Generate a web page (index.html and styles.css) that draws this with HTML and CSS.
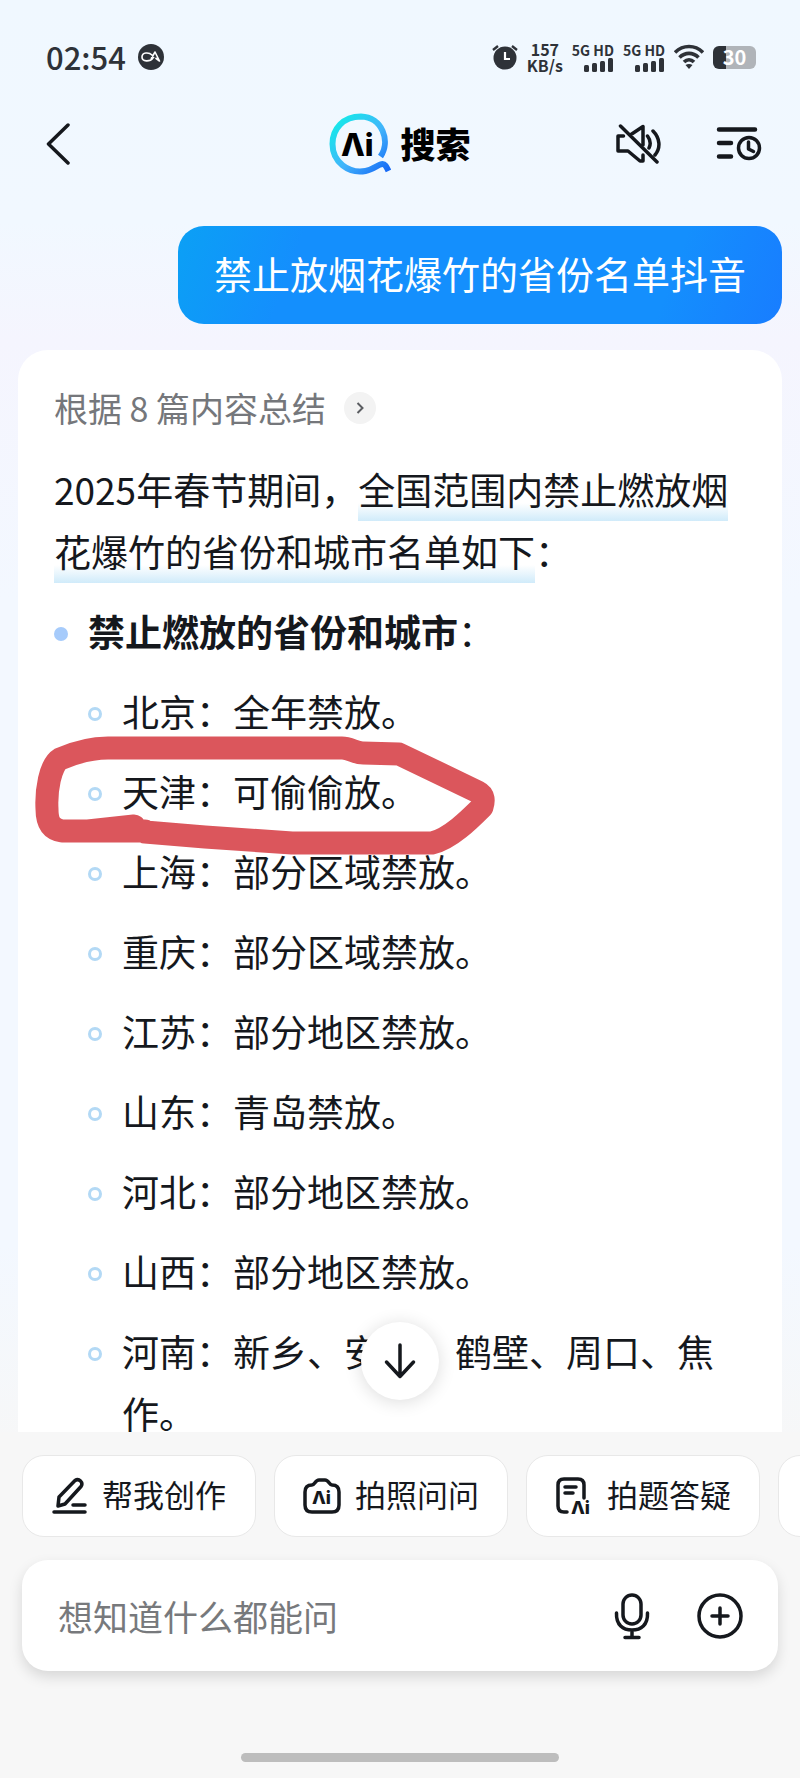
FILE: index.html
```html
<!DOCTYPE html>
<html lang="zh-CN">
  <head>
    <meta charset="UTF-8" />
    <meta name="viewport" content="width=device-width, initial-scale=1.0" />
    <title>Ai 搜索</title>
    <link rel="stylesheet" href="styles.css">
  </head>
  <body>
    <div class="status-bar">
      <div class="status-left">
        <span class="time">02:54</span>
        <svg width="26" height="26" viewBox="0 0 26 26">
          <circle cx="13" cy="13" r="13" fill="#2e3238" />
          <path d="M15 14C12 18 4 18 4 13S11 8 14 11l2 3M13 15l4-7 4.500 9-4-3" fill="none" stroke="#fff" stroke-width="1.6" stroke-linejoin="round" />
        </svg>
      </div>
      <div class="status-right">
        <svg width="26" height="26" viewBox="0 0 26 26">
          <circle cx="13" cy="14" r="11.500" fill="#2e3238" />
          <path d="M1 6l5-4M25 6l-5-4" stroke="#2e3238" stroke-width="2.400" />
          <path d="M13 8v7h5" fill="none" stroke="#fff" stroke-width="2.200" />
        </svg>
        <div class="net-speed"><span>157</span><span>KB/s</span></div>
        <div class="signal">
          <span>5G HD</span>
          <svg width="30" height="14" viewBox="0 0 30 14" fill="#2e3238">
            <rect x="0" y="7" width="5" height="7" rx="1.500" /><rect x="8" y="5" width="5" height="9" rx="1.500" />
            <rect x="16" y="3" width="5" height="11" rx="1.500" /><rect x="24" y="0" width="5" height="14" rx="1.500" />
          </svg>
        </div>
        <div class="signal">
          <span>5G HD</span>
          <svg width="30" height="14" viewBox="0 0 30 14" fill="#2e3238">
            <rect x="0" y="7" width="5" height="7" rx="1.500" /><rect x="8" y="5" width="5" height="9" rx="1.500" />
            <rect x="16" y="3" width="5" height="11" rx="1.500" /><rect x="24" y="0" width="5" height="14" rx="1.500" />
          </svg>
        </div>
        <svg width="30" height="26" viewBox="0 0 30 26" fill="none" stroke="#2e3238" stroke-width="3.600">
          <path d="M1 8.500C9 .5 21 .5 29 8.500M5.500 13.500C11 8 19 8 24.500 13.500M10 18c3-3 7-3 10 0" />
          <path d="M11.500 21q3.500-2 7 0L15 25z" fill="#2e3238" stroke="none" />
        </svg>
        <div class="battery">30</div>
      </div>
    </div>

    <header class="header">
      <button class="icon-btn back" aria-label="返回">
        <svg width="24" height="44" viewBox="0 0 24 44"><path d="M22 3L2.500 22 22 41" /></svg>
      </button>
      <h1 class="logo">
        <svg width="62" height="62" viewBox="0 0 62 62">
          <defs>
            <linearGradient id="ring" x1="0" y1="0" x2="1" y2="1">
              <stop offset="0.1" stop-color="#19e6ea" />
              <stop offset="0.55" stop-color="#41b4fb" />
              <stop offset="1" stop-color="#1668f5" />
            </linearGradient>
          </defs>
          <path d="M51.500 43.500C62 28 53 4 32 3.500 14 3.500 3.500 16 3.500 31c0 18 16 30 33 27 8-1.500 13-7 17-7 3 0 4 3 6 7" fill="none" stroke="url(#ring)" stroke-width="6" />
          <text class="logo-mark" x="12" y="43">Λi</text>
        </svg>
        <span>搜索</span>
      </h1>
      <div class="header-actions">
        <button class="icon-btn" aria-label="静音">
          <svg width="46" height="40" viewBox="0 0 46 40">
            <path d="M4.500 2L41 38M7.500 12H2v15h10l12 10h3v-6M15 10.500L27 2.500V21M31.500 12c3 4 3.500 8 1.500 12M37 7c7 7 8 17 2 24" />
          </svg>
        </button>
        <button class="icon-btn" aria-label="历史记录">
          <svg width="46" height="36" viewBox="0 0 46 36">
            <path d="M3 3.500h36M3 17h12M3 30.500h12" stroke-width="4.500" />
            <circle cx="33" cy="22" r="10.500" /><path d="M32.500 16v7l5 2.500" />
          </svg>
        </button>
      </div>
    </header>

    <main class="chat">
      <p class="question">禁止放烟花爆竹的省份名单抖音</p>

      <article class="answer">
        <a class="sources" href="#">
          根据 8 篇内容总结
          <span class="sources-arrow"><svg width="8" height="12" viewBox="0 0 8 12"><path d="M1.500 1L6.500 6l-5 5" /></svg></span>
        </a>
        <p>2025年春节期间，<mark>全国范围内禁止燃放烟花爆竹的省份和城市名单如下</mark>：</p>
        <ul class="topics">
          <li>
            <strong>禁止燃放的省份和城市</strong>：
            <ul class="places">
              <li>北京：全年禁放。</li>
              <li class="circled">
                天津：可偷偷放。
                <!-- hand-drawn ring -->
                <svg class="ring" width="470" height="130" viewBox="30 730 470 130">
                  <path d="M88 830L134 825 M145 830L108 830H62C50 828 47 820 47 808C46 790 50 764 60 758C76 751 92 747 108 747H342C350 747 355 752 363 752L399 753L478 791C484 794 484 800 482 806C470 818 450 838 432 842H292L205 836L145 831" />
                </svg>
              </li>
              <li>上海：部分区域禁放。</li>
              <li>重庆：部分区域禁放。</li>
              <li>江苏：部分地区禁放。</li>
              <li>山东：青岛禁放。</li>
              <li>河北：部分地区禁放。</li>
              <li>山西：部分地区禁放。</li>
              <li>河南：新乡、安阳、鹤壁、周口、焦作。</li>
            </ul>
          </li>
        </ul>
      </article>

      <button class="scroll-down" aria-label="滚动到底部">
        <svg width="34" height="38" viewBox="0 0 34 38"><path d="M17 3v31M3.500 20L17 34.500 30.500 20" /></svg>
      </button>
    </main>

    <footer class="footer">
      <div class="chips">
        <button class="chip">
          <svg width="36" height="38" viewBox="0 0 36 38">
            <path d="M6 29l1-9L23 3.500q3-2 5.500.5t.5 5.500L13 27zM21 28h12M2 35h31" />
          </svg>
          <span>帮我创作</span>
        </button>
        <button class="chip">
          <svg width="38" height="36" viewBox="0 0 38 36">
            <path d="M9 7c3 0 3-5 7-5h6c4 0 4 5 7 5 5 0 7 3 7 7v13c0 5-3 7-7 7H9c-4 0-7-2-7-7V14c0-4 2-7 7-7z" />
            <text class="chip-mark" x="9" y="26">Λi</text>
          </svg>
          <span>拍照问问</span>
        </button>
        <button class="chip">
          <svg width="38" height="38" viewBox="0 0 38 38">
            <path d="M12 35H9c-4 0-6-2-6-6V8c0-4 2-6 6-6h14c4 0 6 2 6 6v13M10 10h11M10 16h8" />
            <text class="chip-mark" x="16" y="37">Λi</text>
          </svg>
          <span>拍题答疑</span>
        </button>
        <button class="chip" aria-label="更多"></button>
      </div>

      <form class="ask">
        <input type="text" placeholder="想知道什么都能问" aria-label="提问" />
        <button type="button" class="icon-btn" aria-label="语音输入">
          <svg width="36" height="48" viewBox="0 0 36 48">
            <rect x="9" y="3" width="18" height="29" rx="9" />
            <path d="M2.500 21C2 33 9 38 18 38s16-5 15.500-17M18 38v7M11 45.500h14" />
          </svg>
        </button>
        <button type="button" class="icon-btn" aria-label="添加">
          <svg width="48" height="48" viewBox="0 0 48 48">
            <circle cx="24" cy="24" r="21" /><path d="M24 16v16M16 24h16" />
          </svg>
        </button>
      </form>
      <div class="home-bar"></div>
    </footer>
  </body>
</html>
```
FILE: styles.css
```css
*,
*::before {
  box-sizing: border-box;
}

body {
  display: flex;
  flex-direction: column;
  height: 100vh;
  margin: 0;
  overflow: hidden;
  font-family: "Noto Sans CJK SC", sans-serif;
  color: #15181d;
  background: linear-gradient(#f0f8ff 0, #f1f8ff 220px, #f5f5fe 340px, #f3f8ff 600px, #f3f8ff 70%, #f7f7f7 82%);
}

button {
  padding: 0;
  border: none;
  background: none;
  font: inherit;
  color: inherit;
  cursor: pointer;
}

svg {
  display: block;
  flex: none;
}

.icon-btn svg,
.scroll-down svg,
.chip svg {
  fill: none;
  stroke: #15181d;
  stroke-width: 3.5;
  stroke-linecap: round;
  stroke-linejoin: round;
}

/* Status bar */
.status-bar {
  display: flex;
  justify-content: space-between;
  align-items: center;
  height: 48px;
  margin-top: 33px;
  padding: 0 44px 0 46px;
  color: #2e3238;
}

.status-left,
.status-right {
  display: flex;
  align-items: center;
}

.status-left {
  gap: 12px;
}

.status-right {
  gap: 9px;
}

.time {
  padding-bottom: 2px;
  font-size: 31px;
  font-weight: 500;
}

.net-speed,
.signal {
  display: flex;
  flex-direction: column;
  font-weight: 700;
  line-height: 16px;
}

.net-speed {
  align-items: center;
  font-size: 16px;
}

.signal {
  align-items: flex-end;
  font-size: 14px;
}

.battery {
  width: 43px;
  height: 23px;
  border-radius: 6px;
  background: linear-gradient(90deg, #2e3238 30%, #b0b4b9 30%);
  color: #fff;
  font-size: 20px;
  font-weight: 700;
  line-height: 22px;
  text-align: center;
}

/* Header */
.header {
  display: grid;
  grid-template-columns: 1fr auto 1fr;
  align-items: center;
  flex: none;
  height: 126px;
  padding: 0 38px;
}

.back {
  justify-self: start;
  padding-left: 8px;
}

.logo {
  display: flex;
  align-items: center;
  gap: 9px;
  margin: 0;
  font-size: 35px;
  font-weight: 900;
  line-height: 62px;
  color: #000;
}

.logo span {
  padding-bottom: 3px;
}

.logo-mark {
  font-family: Inter, sans-serif;
  font-size: 31px;
  font-weight: 800;
}

.header-actions {
  display: flex;
  justify-content: flex-end;
  align-items: center;
  gap: 54px;
}

/* Conversation */
.chat {
  position: relative;
  display: flex;
  flex-direction: column;
  flex: 1;
  min-height: 0;
  padding: 19px 18px 0;
  overflow: hidden;
}

.question {
  align-self: flex-end;
  margin: 0 0 26px;
  padding: 18px 36px 22px;
  border-radius: 26px;
  background: linear-gradient(110deg, #0ba0f5, #148ffd 20%, #148ffd 80%, #187dff);
  color: #fff;
  font-size: 38px;
  line-height: 58px;
}

.answer {
  padding: 34px 36px 0;
  border-radius: 30px 30px 0 0;
  background: #fff;
  font-size: 37px;
  line-height: 62px;
}

.answer p {
  margin: 26px 0 18px;
}

.sources {
  display: flex;
  align-items: center;
  gap: 18px;
  color: #75777b;
  font-size: 34px;
  line-height: 48px;
  text-decoration: none;
}

.sources-arrow {
  display: grid;
  place-items: center;
  width: 32px;
  height: 32px;
  border-radius: 50%;
  background: #f3f3f3;
}

.sources-arrow svg {
  fill: none;
  stroke: #5b5d61;
  stroke-width: 2;
}

mark {
  padding-bottom: 5px;
  color: inherit;
  background: linear-gradient(rgba(208, 235, 250, 0), #d0ebfa) no-repeat bottom / 100% 18px;
  -webkit-box-decoration-break: clone;
  box-decoration-break: clone;
}

ul {
  margin: 0;
  padding: 0;
  list-style: none;
}

.topics li {
  position: relative;
  padding-left: 34px;
}

.places li {
  margin-top: 18px;
}

.topics li::before {
  content: "";
  position: absolute;
  top: 27px;
  left: 0;
  width: 14px;
  height: 14px;
  border-radius: 50%;
  background: #a6cbfb;
}

.topics .places li::before {
  border: 3px solid #b3d9f5;
  background: none;
}

.circled .ring {
  position: absolute;
  top: -29px;
  left: -58px;
  z-index: 1;
  fill: none;
  stroke: #db565c;
  stroke-width: 23;
  stroke-linecap: round;
  stroke-linejoin: round;
}

.scroll-down {
  position: absolute;
  bottom: 32px;
  left: 50%;
  z-index: 1;
  display: grid;
  place-items: center;
  width: 78px;
  height: 78px;
  margin-left: -39px;
  border-radius: 50%;
  background: #fff;
  box-shadow: 0 2px 18px rgba(0, 0, 0, 0.14);
}

/* Footer */
.footer {
  flex: none;
  padding: 23px 22px 16px;
  background: #f7f7f7;
}

.chips {
  display: flex;
  gap: 18px;
  margin-right: -22px;
  overflow: hidden;
}

.chip {
  display: flex;
  justify-content: center;
  align-items: center;
  gap: 14px;
  flex: none;
  width: 234px;
  height: 82px;
  border: 1px solid #e8e8e8;
  border-radius: 22px;
  background: #fff;
  font-size: 31px;
}

.chip span {
  padding-bottom: 6px;
}

.chip-mark {
  fill: #15181d;
  stroke: none;
  font-family: Inter, sans-serif;
  font-size: 18px;
  font-weight: 800;
}

.ask {
  display: flex;
  align-items: center;
  gap: 46px;
  height: 111px;
  margin: 23px 0 82px;
  padding: 0 34px 0 36px;
  border-radius: 26px;
  background: #fff;
  box-shadow: 0 6px 14px rgba(0, 0, 0, 0.13);
}

.ask input {
  flex: 1;
  min-width: 0;
  padding: 0;
  border: none;
  outline: none;
  background: none;
  font: inherit;
  font-size: 35px;
}

.ask input::placeholder {
  color: #77797c;
}

.home-bar {
  width: 42%;
  height: 9px;
  margin: 0 auto;
  border-radius: 5px;
  background: #bdbdbd;
}
```
